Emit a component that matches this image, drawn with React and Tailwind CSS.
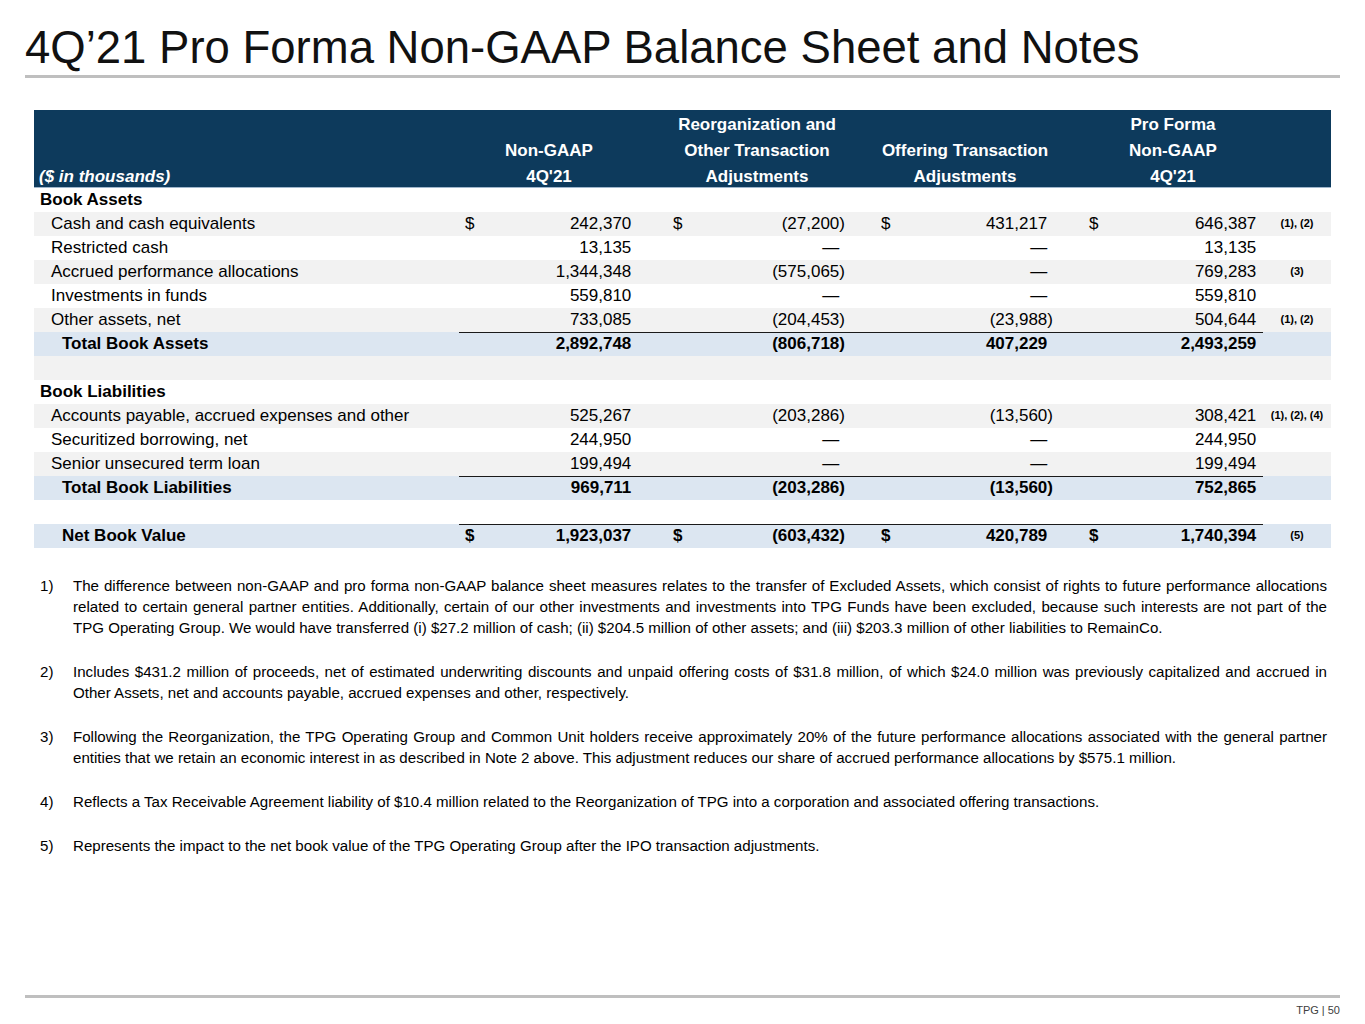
import React from 'react';

const GRID = 'grid grid-cols-[425px_208px_208px_208px_180px_68px]';

const rows = [
  { label: 'Book Assets', level: 0, bg: 'white', bold: true },
  { label: 'Cash and cash equivalents', level: 1, bg: 'gray', dollar: true, vals: ['242,370', '(27,200)', '431,217', '646,387'], note: '(1), (2)' },
  { label: 'Restricted cash', level: 1, bg: 'white', vals: ['13,135', '—', '—', '13,135'] },
  { label: 'Accrued performance allocations', level: 1, bg: 'gray', vals: ['1,344,348', '(575,065)', '—', '769,283'], note: '(3)' },
  { label: 'Investments in funds', level: 1, bg: 'white', vals: ['559,810', '—', '—', '559,810'] },
  { label: 'Other assets, net', level: 1, bg: 'gray', vals: ['733,085', '(204,453)', '(23,988)', '504,644'], note: '(1), (2)' },
  { label: 'Total Book Assets', level: 2, bg: 'blue', bold: true, rule: true, vals: ['2,892,748', '(806,718)', '407,229', '2,493,259'] },
  { label: '', level: 0, bg: 'gray' },
  { label: 'Book Liabilities', level: 0, bg: 'white', bold: true },
  { label: 'Accounts payable, accrued expenses and other', level: 1, bg: 'gray', vals: ['525,267', '(203,286)', '(13,560)', '308,421'], note: '(1), (2), (4)' },
  { label: 'Securitized borrowing, net', level: 1, bg: 'white', vals: ['244,950', '—', '—', '244,950'] },
  { label: 'Senior unsecured term loan', level: 1, bg: 'gray', vals: ['199,494', '—', '—', '199,494'] },
  { label: 'Total Book Liabilities', level: 2, bg: 'blue', bold: true, rule: true, vals: ['969,711', '(203,286)', '(13,560)', '752,865'] },
  { label: '', level: 0, bg: 'white' },
  { label: 'Net Book Value', level: 2, bg: 'blue', bold: true, rule: true, dollar: true, vals: ['1,923,037', '(603,432)', '420,789', '1,740,394'], note: '(5)' },
];

const notes = [
  'The difference between non-GAAP and pro forma non-GAAP balance sheet measures relates to the transfer of Excluded Assets, which consist of rights to future performance allocations related to certain general partner entities. Additionally, certain of our other investments and investments into TPG Funds have been excluded, because such interests are not part of the TPG Operating Group. We would have transferred (i) $27.2 million of cash; (ii) $204.5 million of other assets; and (iii) $203.3 million of other liabilities to RemainCo.',
  'Includes $431.2 million of proceeds, net of estimated underwriting discounts and unpaid offering costs of $31.8 million, of which $24.0 million was previously capitalized and accrued in Other Assets, net and accounts payable, accrued expenses and other, respectively.',
  'Following the Reorganization, the TPG Operating Group and Common Unit holders receive approximately 20% of the future performance allocations associated with the general partner entities that we retain an economic interest in as described in Note 2 above. This adjustment reduces our share of accrued performance allocations by $575.1 million.',
  'Reflects a Tax Receivable Agreement liability of $10.4 million related to the Reorganization of TPG into a corporation and associated offering transactions.',
  'Represents the impact to the net book value of the TPG Operating Group after the IPO transaction adjustments.',
];

const bgClass = { white: 'bg-white', gray: 'bg-[#f2f2f2]', blue: 'bg-[#dce6f1]' };
const indent = ['pl-[6px]', 'pl-[17px]', 'pl-[28px]'];

const Amount = ({ value, dollar, rule, last }) => {
  const neg = value && value.endsWith(')');
  const main = neg ? value.slice(0, -1) : value;
  return (
    <div className={`flex items-center h-6 ${rule ? 'border-t border-[#1a1a1a]' : ''} ${last ? 'pr-[1px]' : 'pr-[30px]'}`}>
      <span className="pl-[6px]">{dollar ? '$' : ''}</span>
      <span className="ml-auto">{main}</span>
      <span className={neg ? '' : 'invisible'}>)</span>
    </div>
  );
};

const Row = ({ row }) => (
  <div className={`${GRID} h-6 ${bgClass[row.bg]} ${row.bold ? 'font-bold' : ''}`}>
    <div className={`flex items-center h-6 ${indent[row.level]}`}>{row.label}</div>
    {[0, 1, 2, 3].map((i) =>
      row.vals ? (
        <Amount key={i} value={row.vals[i]} dollar={row.dollar} rule={row.rule} last={i === 3} />
      ) : (
        <div key={i} />
      )
    )}
    <div className="flex items-center justify-center h-6 text-[11px] font-bold">{row.note || ''}</div>
  </div>
);

const HeadCell = ({ lines }) => (
  <div className="flex flex-col justify-end translate-y-[2px]">
    {lines.map((l) => (
      <div key={l} className="w-[180px] text-center leading-[26px]">{l}</div>
    ))}
  </div>
);

export default function App() {
  return (
    <div className="w-[1365px] h-[1024px] flex flex-col bg-white text-black font-['Liberation_Sans',Arial,sans-serif]">
      {/* Title */}
      <h1 className="pl-[25px] pt-[25px] text-[45.5px] leading-none text-[#111]">
        4Q’21 Pro Forma Non-GAAP Balance Sheet and Notes
      </h1>
      <div className="ml-[25px] mt-[4px] w-[1315px] h-[3px] bg-[#bfbfbf]" />

      {/* Table */}
      <div className="ml-[34px] mt-[32px] w-[1297px] text-[17px]">
        <div className={`${GRID} h-[78px] bg-[#0d3a5c] text-white font-bold border-b border-[#9fb6cc]`}>
          <div className="flex items-end pl-[5px] italic leading-[26px] translate-y-[2px]">($ in thousands)</div>
          <HeadCell lines={['Non-GAAP', "4Q'21"]} />
          <HeadCell lines={['Reorganization and', 'Other Transaction', 'Adjustments']} />
          <HeadCell lines={['Offering Transaction', 'Adjustments']} />
          <HeadCell lines={['Pro Forma', 'Non-GAAP', "4Q'21"]} />
          <div />
        </div>
        {rows.map((r, i) => (
          <Row key={i} row={r} />
        ))}
      </div>

      {/* Notes */}
      <div className="ml-[40px] mt-[27px] w-[1287px] text-[15.1px] leading-[21px] flex flex-col gap-[23px]">
        {notes.map((n, i) => (
          <div key={i} className="flex">
            <span className="w-[33px] shrink-0">{i + 1})</span>
            <p className="text-justify">{n}</p>
          </div>
        ))}
      </div>

      {/* Footer */}
      <div className="mt-auto pb-[7px]">
        <div className="ml-[25px] w-[1315px] h-[3px] bg-[#bfbfbf]" />
        <div className="mt-[5px] w-[1340px] text-right text-[11px] leading-[14px] text-[#404040]">TPG | 50</div>
      </div>
    </div>
  );
}
